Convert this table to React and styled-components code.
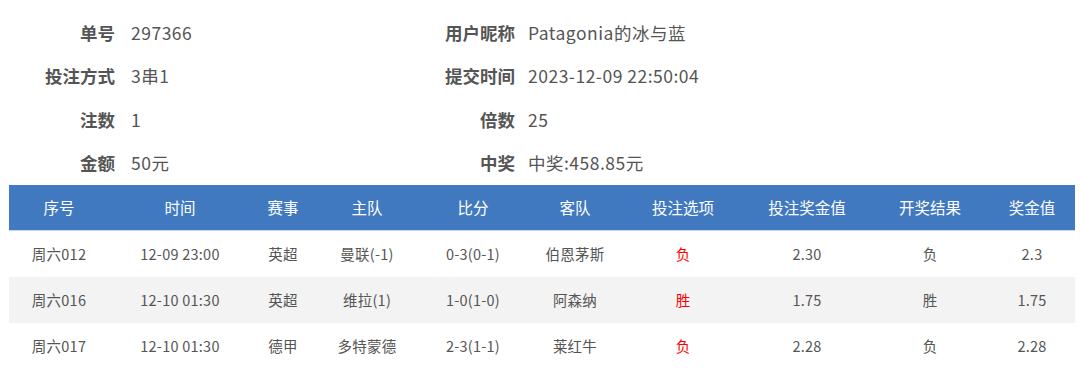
import React from "react";
import styled, { createGlobalStyle } from "styled-components";

const Global = createGlobalStyle`
  html, body { margin: 0; padding: 0; background: #fff; }
  body { font-family: "Noto Sans CJK SC", "Noto Sans", sans-serif; color: #555; }
`;

const Page = styled.div`
  width: 1080px;
  height: 380px;
  overflow: hidden;
  background: #fff;
`;

const Info = styled.div`
  display: grid;
  grid-template-columns: 131px 269px 128px 1fr;
  grid-auto-rows: 43.5px;
  padding-top: 10.5px;
  align-items: center;
  font-size: 17.5px;
  color: #555;
`;

const Label = styled.div`
  text-align: right;
  font-weight: 700;
  padding-right: ${(p) => p.$pad}px;
  white-space: nowrap;
`;

const Value = styled.div`
  white-space: nowrap;
  letter-spacing: 0.5px;
`;

const Table = styled.table`
  margin-left: 9px;
  width: 1066px;
  border-collapse: collapse;
  table-layout: fixed;
`;

const HeadCell = styled.th`
  background: #4179c0;
  color: #fff;
  font-weight: 400;
  font-size: 15.5px;
  height: 45px;
  padding: 0;
  text-align: center;
  border-bottom: 1px solid #c6d9f0;
  white-space: nowrap;
`;

const Row = styled.tr`
  background: ${(p) => (p.$alt ? "#f3f3f3" : "#fff")};
`;

const Cell = styled.td`
  height: 46px;
  padding: 0;
  text-align: center;
  font-size: 14.5px;
  letter-spacing: 0.25px;
  color: ${(p) => (p.$red ? "#ff0000" : "#555")};
  white-space: nowrap;
`;

const cols = [100, 142, 64, 104, 108, 96, 120, 128, 118, 86];
const heads = ["序号", "时间", "赛事", "主队", "比分", "客队", "投注选项", "投注奖金值", "开奖结果", "奖金值"];
const rows = [
  ["周六012", "12-09 23:00", "英超", "曼联(-1)", "0-3(0-1)", "伯恩茅斯", "负", "2.30", "负", "2.3"],
  ["周六016", "12-10 01:30", "英超", "维拉(1)", "1-0(1-0)", "阿森纳", "胜", "1.75", "胜", "1.75"],
  ["周六017", "12-10 01:30", "德甲", "多特蒙德", "2-3(1-1)", "莱红牛", "负", "2.28", "负", "2.28"],
];

const info = [
  ["单号", "297366", "用户昵称", "Patagonia的冰与蓝"],
  ["投注方式", "3串1", "提交时间", "2023-12-09 22:50:04"],
  ["注数", "1", "倍数", "25"],
  ["金额", "50元", "中奖", "中奖:458.85元"],
];

export default function App() {
  return (
    <Page>
      <Global />
      <Info>
        {info.map((r, i) => (
          <React.Fragment key={i}>
            <Label $pad={16}>{r[0]}</Label>
            <Value>{r[1]}</Value>
            <Label $pad={13}>{r[2]}</Label>
            <Value>{r[3]}</Value>
          </React.Fragment>
        ))}
      </Info>
      <Table>
        <colgroup>
          {cols.map((w, i) => (
            <col key={i} style={{ width: w }} />
          ))}
        </colgroup>
        <thead>
          <tr>
            {heads.map((h) => (
              <HeadCell key={h}>{h}</HeadCell>
            ))}
          </tr>
        </thead>
        <tbody>
          {rows.map((r, i) => (
            <Row key={i} $alt={i === 1}>
              {r.map((c, j) => (
                <Cell key={j} $red={j === 6}>{c}</Cell>
              ))}
            </Row>
          ))}
        </tbody>
      </Table>
    </Page>
  );
}
